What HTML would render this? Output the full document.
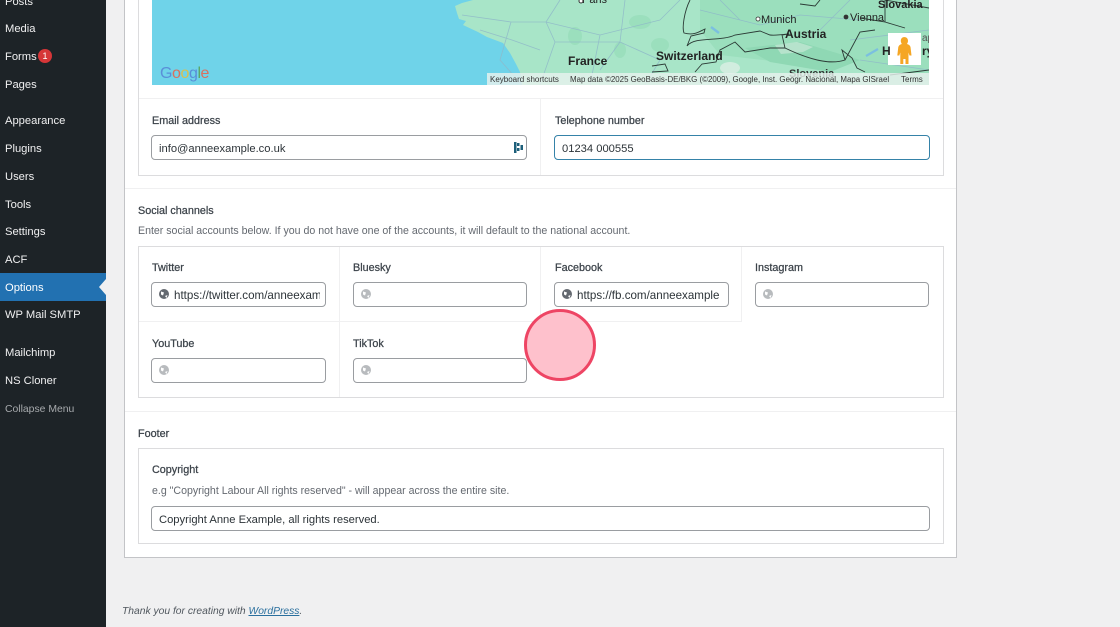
<!DOCTYPE html>
<html><head><meta charset="utf-8"><style>
*{box-sizing:border-box}
html,body{margin:0;padding:0;width:1120px;height:627px;overflow:hidden;background:#f0f0f1;font-family:"Liberation Sans",sans-serif;color:#3c434a}
.a{position:absolute}
.t{position:absolute;white-space:nowrap;line-height:16px}
.m{font-size:11.2px;color:#f0f0f1;left:5px}
.l{font-size:10.8px;color:#3c434a;font-weight:400;-webkit-text-stroke:.25px #3c434a}
.d{font-size:10.6px;color:#646970}
.b{position:absolute;background:#fff;border:1px solid #dcdcde}
.i{position:absolute;background:#fff;border:1px solid #9a9da1;border-radius:4px;height:25px;font-size:11.2px;line-height:26px;color:#2c3338;padding-left:7px;white-space:nowrap;overflow:hidden}
.s{display:block;overflow:hidden;height:23px;line-height:25px;font-size:11.6px}
.g{position:absolute;width:10px;height:10px}
.h{position:absolute;background:#f0f0f1;height:1px}
.v{position:absolute;background:#f0f0f1;width:1px}
</style></head><body>
<div class="a" style="left:0;top:0;width:106px;height:627px;background:#1d2327"></div>
<div class="a" style="left:0;top:273px;width:106px;height:28px;background:#2271b1"></div>
<div class="a" style="left:99px;top:279px;width:0;height:0;border:8px solid transparent;border-left:0;border-right:7px solid #f0f0f1"></div>
<div class="t m" style="top:-6px">Posts</div>
<div class="t m" style="top:21px">Media</div>
<div class="t m" style="top:49px">Forms</div>
<div class="a" style="left:38px;top:49px;width:14px;height:14px;border-radius:50%;background:#d63638;color:#fff;font-size:9px;line-height:14px;text-align:center">1</div>
<div class="t m" style="top:77px">Pages</div>
<div class="t m" style="top:113px">Appearance</div>
<div class="t m" style="top:141px">Plugins</div>
<div class="t m" style="top:169px">Users</div>
<div class="t m" style="top:197px">Tools</div>
<div class="t m" style="top:224px">Settings</div>
<div class="t m" style="top:252px">ACF</div>
<div class="t m" style="top:280px;color:#fff">Options</div>
<div class="t m" style="top:307px">WP Mail SMTP</div>
<div class="t m" style="top:345px">Mailchimp</div>
<div class="t m" style="top:373px">NS Cloner</div>
<div class="t m" style="top:402px;font-size:10.4px;color:#a7aaad">Collapse Menu</div>

<div class="b" style="left:124px;top:-5px;width:833px;height:563px;border-color:#c3c4c7"></div>
<div class="b" style="left:138px;top:-5px;width:806px;height:181px"></div>
<div class="h" style="left:139px;top:98px;width:804px"></div>
<div class="v" style="left:540px;top:99px;height:76px"></div>

<svg class="a" style="left:152px;top:0" width="777" height="85" viewBox="152 0 777 85" xmlns="http://www.w3.org/2000/svg">
<rect x="152" y="0" width="777" height="85" fill="#6fd3e9"/>
<path d="M473 0L462 3L455 6L457 13L459 19L466 21L463 25L478 32L487 37L503 43L510 53L516 64L520 72L522 85H929V0Z" fill="#a8e5c8"/>
<g fill="#9bdfbd">
<ellipse cx="575" cy="36" rx="7" ry="9"/><ellipse cx="640" cy="22" rx="11" ry="7"/><ellipse cx="620" cy="50" rx="6" ry="8"/>
<path d="M700 0H929V85H880L850 60L780 62L720 55L700 30Z"/><ellipse cx="660" cy="45" rx="9" ry="7"/>
</g>
<path d="M745 48L800 42L860 60L830 72L770 62Z" fill="#8fd8b4"/>
<path d="M775 45l22 -3l16 5l-10 5l-22 2Z" fill="#d0ebdc" opacity=".6"/>
<ellipse cx="730" cy="68" rx="10" ry="6" fill="#e2f1e8" opacity=".7"/>
<g fill="none" stroke="#8fb9c9" stroke-width=".8" opacity=".85">
<path d="M462 15L511 22L546 22L600 35L660 20M511 22L500 60L522 85M546 22L555 42L620 42L660 60M555 42L540 85M600 35L590 85M480 30L512 40L540 50M620 42L625 0M560 0L546 22M660 20L680 0M620 42L600 70M660 60L645 85"/>
<path d="M700 10L760 25L800 15L860 20M850 40L929 30M860 60L929 70M720 0L740 20M820 30L850 0"/>
</g>
<g fill="none" stroke="#2b3a35" stroke-width=".9">
<path d="M690 0C684 12 682 28 684 33C695 36 700 31 705 29L704 33L691 36L687 46C695 36 720 42 735 35L760 31L770 35C778 36 800 32 782 35L785 48C810 60 830 65 845 60L842 50L852 58L857 68L865 72M785 48L770 48L745 52L735 42L720 50L716 62L702 64L695 72M652 66L665 64L668 71L652 72M845 60L860 32L875 30M860 18L885 22L885 0L929 8M800 4L815 6L820 0M905 28L885 22M890 75L929 70"/>
</g>
<path d="M711 27l8 6" stroke="#7bbfe0" stroke-width="2.4"/><path d="M866 56l12 -7" stroke="#7bbfe0" stroke-width="2.2"/>
<text x="789" y="77" font-family="Liberation Sans,sans-serif" font-weight="700" font-size="11" fill="#333">Slovenia</text>
<rect x="487" y="73" width="442" height="12" fill="#e8f2ee" opacity=".82"/>
<rect x="888" y="33" width="33" height="32" fill="#fff"/>
<path d="M904 37c3 0 4 2 4 4c0 1 -.5 2 -1 3c2 .5 3 1.500 3.500 3l1 8.500h-2l-1 -3v11.500h-3v-5h-2.200v5h-3v-11.500l-1 3h-2l1 -8.500c.5 -1.500 1.500 -2.500 3.500 -3c-.5 -1 -1 -2 -1 -3c0 -2 1 -4 3.700 -4Z" fill="#f5a623"/>
<g font-family="Liberation Sans,sans-serif" font-size="12" fill="#222">
<text x="568" y="65" font-weight="700" font-size="12">France</text>
<text x="656" y="60" font-weight="700" font-size="12">Switzerland</text>
<text x="785" y="38" font-weight="700" font-size="12">Austria</text>
<text x="761" y="23" font-size="11">Munich</text>
<text x="850" y="21" font-size="11">Vienna</text>
<text x="878" y="8" font-weight="700" font-size="11">Slovakia</text>
<text x="582" y="3" font-size="11">Paris</text>
<text x="922" y="55" font-weight="700" font-size="12">ry</text>
<text x="882" y="55" font-weight="700" font-size="12">H</text>
<text x="922" y="41" font-size="10" fill="#555">ap</text>
<text x="490" y="82" font-size="8" fill="#333">Keyboard shortcuts</text>
<text x="570" y="82" font-size="7.900" fill="#333">Map data ©2025 GeoBasis-DE/BKG (©2009), Google, Inst. Geogr. Nacional, Mapa GISrael</text>
<text x="901" y="82" font-size="8" fill="#333">Terms</text>
</g>
<circle cx="581" cy="1" r="2" fill="#fff" stroke="#333"/><circle cx="758" cy="19" r="2" fill="#fff" stroke="#333" stroke-width=".8"/><circle cx="846" cy="17" r="2" fill="#333" stroke="#333" stroke-width=".8"/>
<g font-family="Liberation Sans,sans-serif" font-size="16">
<text x="160" y="78" fill="#5a8fd8">G</text><text x="172" y="78" fill="#d9705f">o</text><text x="180.500" y="78" fill="#d9c04f">o</text><text x="189" y="78" fill="#5a8fd8">g</text><text x="197.500" y="78" fill="#5aa864">l</text><text x="200.500" y="78" fill="#d9705f">e</text>
</g>
</svg>

<div class="t l" style="left:152px;top:113px">Email address</div>
<div class="i" style="left:151px;top:135px;width:376px">info@anneexample.co.uk</div>
<svg class="a" style="left:514px;top:142px" width="10" height="12"><path d="M0 0h2.500v11h-2.500zM3 1h2.500v3h-2.500zM3 6h2.500v3h-2.500zM6.500 3h2.500v5h-2.500z" fill="#1d5f7a"/></svg>
<div class="t l" style="left:555px;top:113px">Telephone number</div>
<div class="i" style="left:554px;top:135px;width:376px;border-color:#3582a8">01234 000555</div>

<div class="h" style="left:125px;top:188px;width:831px"></div>
<div class="t l" style="left:138px;top:203px">Social channels</div>
<div class="t d" style="left:138px;top:223px">Enter social accounts below. If you do not have one of the accounts, it will default to the national account.</div>
<div class="b" style="left:138px;top:246px;width:806px;height:152px"></div>
<div class="h" style="left:139px;top:321px;width:603px"></div>
<div class="v" style="left:339px;top:247px;height:150px"></div>
<div class="v" style="left:540px;top:247px;height:74px"></div>
<div class="v" style="left:741px;top:247px;height:74px"></div>

<div class="t l" style="left:152px;top:260px">Twitter</div>
<div class="i" style="left:151px;top:282px;width:175px;padding-left:22px"><span class="s" style="width:146px">https://twitter.com/anneexample</span></div>
<div class="t l" style="left:353px;top:260px">Bluesky</div>
<div class="i" style="left:353px;top:282px;width:174px"></div>
<div class="t l" style="left:555px;top:260px">Facebook</div>
<div class="i" style="left:554px;top:282px;width:175px;padding-left:22px"><span class="s">https://fb.com/anneexample</span></div>
<div class="t l" style="left:755px;top:260px">Instagram</div>
<div class="i" style="left:755px;top:282px;width:174px"></div>
<div class="t l" style="left:152px;top:336px">YouTube</div>
<div class="i" style="left:151px;top:358px;width:175px"></div>
<div class="t l" style="left:353px;top:336px">TikTok</div>
<div class="i" style="left:353px;top:358px;width:174px"></div>

<svg class="g" style="left:159px;top:289px"><circle cx="5" cy="5" r="5" fill="#646970"/><path d="M2 2.500l3 1l-1 3l-2-1zM6 7l2.500-1l-1 3z" fill="#fff"/></svg>
<svg class="g" style="left:562px;top:289px"><circle cx="5" cy="5" r="5" fill="#646970"/><path d="M2 2.500l3 1l-1 3l-2-1zM6 7l2.500-1l-1 3z" fill="#fff"/></svg>
<svg class="g" style="left:361px;top:289px"><circle cx="5" cy="5" r="5" fill="#b8bbbe"/><path d="M2 2.500l3 1l-1 3l-2-1zM6 7l2.500-1l-1 3z" fill="#fff"/></svg>
<svg class="g" style="left:763px;top:289px"><circle cx="5" cy="5" r="5" fill="#b8bbbe"/><path d="M2 2.500l3 1l-1 3l-2-1zM6 7l2.500-1l-1 3z" fill="#fff"/></svg>
<svg class="g" style="left:159px;top:365px"><circle cx="5" cy="5" r="5" fill="#b8bbbe"/><path d="M2 2.500l3 1l-1 3l-2-1zM6 7l2.500-1l-1 3z" fill="#fff"/></svg>
<svg class="g" style="left:361px;top:365px"><circle cx="5" cy="5" r="5" fill="#b8bbbe"/><path d="M2 2.500l3 1l-1 3l-2-1zM6 7l2.500-1l-1 3z" fill="#fff"/></svg>

<div class="a" style="left:524px;top:309px;width:72px;height:72px;border-radius:50%;background:#fec1cc;border:3px solid #ee4564"></div>

<div class="h" style="left:125px;top:411px;width:831px"></div>
<div class="t l" style="left:138px;top:426px">Footer</div>
<div class="b" style="left:138px;top:448px;width:806px;height:96px"></div>
<div class="t l" style="left:152px;top:462px">Copyright</div>
<div class="t d" style="left:152px;top:483px">e.g "Copyright Labour All rights reserved" - will appear across the entire site.</div>
<div class="i" style="left:151px;top:506px;width:779px">Copyright Anne Example, all rights reserved.</div>

<div class="t" style="left:122px;top:604px;font-size:10.300px;font-style:italic;color:#50575e">Thank you for creating with <span style="color:#2a6f9e;text-decoration:underline">WordPress</span>.</div>
</body></html>
